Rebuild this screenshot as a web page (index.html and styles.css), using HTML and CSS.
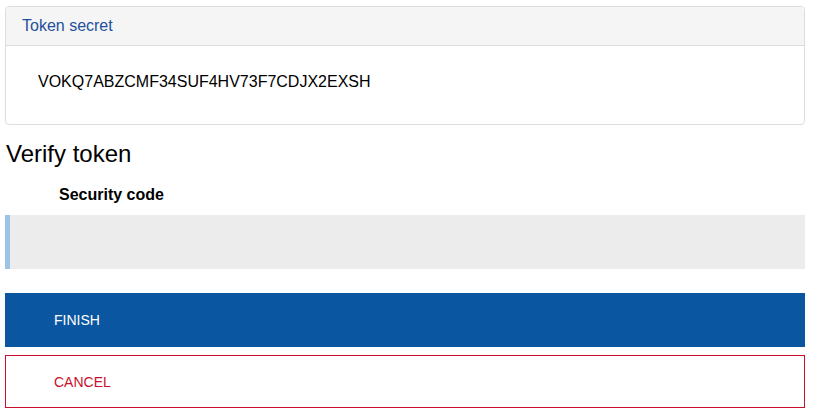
FILE: index.html
```html
<!DOCTYPE html>
<html lang="en">
<head>
<meta charset="utf-8">
<title>Verify token</title>
<link rel="stylesheet" href="styles.css">
</head>
<body>
<main class="page">
  <section class="panel">
    <div class="panel-heading">Token secret</div>
    <div class="panel-body">VOKQ7ABZCMF34SUF4HV73F7CDJX2EXSH</div>
  </section>
  <h2 class="title">Verify token</h2>
  <form class="form">
    <label class="label" for="code">Security code</label>
    <input class="input" id="code" type="text">
    <div class="actions">
      <button type="button" class="btn btn-primary">FINISH</button>
      <button type="button" class="btn btn-cancel">CANCEL</button>
    </div>
  </form>
</main>
</body>
</html>
```
FILE: styles.css
```css
* { box-sizing: border-box; }
html, body { margin: 0; padding: 0; background: #fff; }
body {
  font-family: "Liberation Sans", Arial, sans-serif;
  color: #000;
}
.page {
  width: 800px;
  margin: 6px 0 0 5px;
}
.panel {
  border: 1px solid #dddddd;
  border-radius: 4px;
  height: 119px;
}
.panel-heading {
  background: #f5f5f5;
  border-bottom: 1px solid #dddddd;
  border-radius: 3px 3px 0 0;
  padding: 10px 16px;
  height: 39px;
  font-size: 16px;
  line-height: 18px;
  color: #23509c;
}
.panel-body {
  padding: 27px 32px 0;
  font-size: 16px;
  line-height: 18px;
}
.title {
  margin: 15px 0 0 1px;
  font-size: 24px;
  font-weight: normal;
  line-height: 28px;
}
.form {
  display: flex;
  flex-direction: column;
}
.label {
  margin: 18px 0 0 54px;
  font-size: 16px;
  line-height: 18px;
  font-weight: bold;
}
.input {
  margin-top: 11px;
  height: 54px;
  border: none;
  border-left: 5px solid #9dc3e6;
  background: #ececec;
  outline: none;
  font: inherit;
}
.actions {
  margin-top: 24px;
  display: flex;
  flex-direction: column;
  gap: 8px;
}
.btn {
  height: 53px;
  padding: 0 0 0 48px;
  text-align: left;
  font-family: "Liberation Sans", Arial, sans-serif;
  font-size: 14px;
  border-radius: 0;
  cursor: pointer;
}
.btn-primary {
  background: #0b56a0;
  color: #fff;
  border: 1px solid #0b56a0;
  height: 54px;
}
.btn-cancel {
  background: #fff;
  color: #c8102e;
  border: 1px solid #c8102e;
}
```
